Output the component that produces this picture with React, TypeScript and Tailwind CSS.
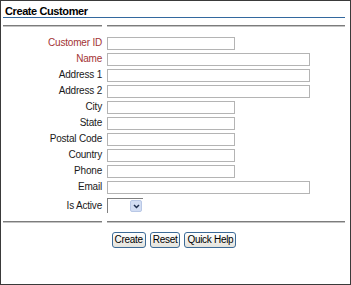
import * as React from "react";

const font = { fontFamily: '"Liberation Sans", Arial, sans-serif' };

type Field = { label: string; wide?: boolean; required?: boolean };

const fields: Field[] = [
  { label: "Customer ID", required: true },
  { label: "Name", required: true, wide: true },
  { label: "Address 1", wide: true },
  { label: "Address 2", wide: true },
  { label: "City" },
  { label: "State" },
  { label: "Postal Code" },
  { label: "Country" },
  { label: "Phone" },
  { label: "Email", wide: true },
];

function Divider() {
  return (
    <div className="flex gap-[5px]">
      <div className="w-[99px] border-t border-b border-t-[#7c7c7c] border-b-[#c4c4c4]" />
      <div className="flex-1 border-t border-b border-t-[#7c7c7c] border-b-[#c4c4c4]" />
    </div>
  );
}

function FormButton({ children }: { children: React.ReactNode }) {
  return (
    <button className="h-[16px] px-[2px] rounded-[3px] border border-[#3d6b97] bg-gradient-to-b from-white to-[#e4e3dc] text-[10px] leading-[14px] text-black tracking-[-0.3px]">
      {children}
    </button>
  );
}

export default function App() {
  return (
    <div
      className="w-[351px] h-[285px] border border-[#3a3a3a] bg-white flex flex-col"
      style={font}
    >
      {/* header */}
      <div className="h-[16px] pl-[4px] pt-[4px] text-[11px] leading-[12px] font-bold text-black tracking-[-0.4px]">
        Create Customer
      </div>
      <div className="mx-[2px] mr-[5px] h-px bg-[#33689e]" />

      <div className="pl-[2px] pr-[5px] mt-[7px]">
        <Divider />

        {/* fields */}
        <div className="mt-[8px] flex flex-col">
          {fields.map((f) => (
            <div key={f.label} className="h-[16px] flex items-center gap-[5px]">
              <div
                className={
                  "w-[99px] text-right text-[10px] leading-[12px] tracking-[-0.2px] " +
                  (f.required ? "text-[#a33434]" : "text-[#1a1a1a]")
                }
              >
                {f.label}
              </div>
              <div
                className={
                  "h-[13px] border border-[#b4b4b4] bg-white " +
                  (f.wide ? "w-[203px]" : "w-[128px]")
                }
              />
            </div>
          ))}

          {/* Is Active */}
          <div className="h-[20px] flex items-start gap-[5px] pt-[3px]">
            <div className="w-[99px] text-right text-[10px] leading-[12px] tracking-[-0.2px] text-[#1a1a1a] pt-[2px]">
              Is Active
            </div>
            <div className="w-[36px] h-[15px] flex border-l border-t border-[#808080] bg-white">
              <div className="flex-1" />
              <div className="w-[12px] h-[12px] mt-[1px] mr-px rounded-[2px] border border-[#b9c8e6] bg-[#d2ddf3] flex items-center justify-center">
                <svg width="7" height="5" viewBox="0 0 7 5">
                  <path d="M1 1 L3.5 3.5 L6 1" stroke="#1f2f4f" strokeWidth="1.5" fill="none" />
                </svg>
              </div>
            </div>
          </div>
        </div>

        <div className="mt-[6px]">
          <Divider />
        </div>

        {/* buttons */}
        <div className="mt-[9px] flex justify-center gap-[4px]">
          <FormButton>Create</FormButton>
          <FormButton>Reset</FormButton>
          <FormButton>Quick Help</FormButton>
        </div>
      </div>
    </div>
  );
}
